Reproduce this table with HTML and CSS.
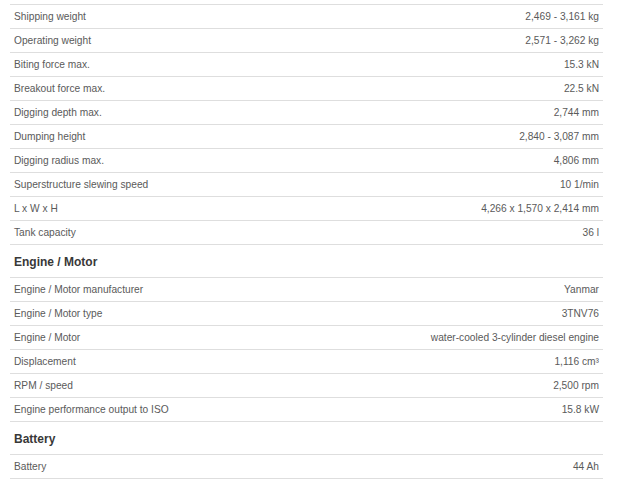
FILE: index.html
```html
<!DOCTYPE html>
<html>
<head>
<meta charset="utf-8">
<link rel="stylesheet" href="styles.css">
</head>
<body>
<div class="specs">
  <table class="spec-table">
    <tr class="row"><td class="label">Shipping weight</td><td class="value">2,469 - 3,161 kg</td></tr>
    <tr class="row"><td class="label">Operating weight</td><td class="value">2,571 - 3,262 kg</td></tr>
    <tr class="row"><td class="label">Biting force max.</td><td class="value">15.3 kN</td></tr>
    <tr class="row"><td class="label">Breakout force max.</td><td class="value">22.5 kN</td></tr>
    <tr class="row"><td class="label">Digging depth max.</td><td class="value">2,744 mm</td></tr>
    <tr class="row"><td class="label">Dumping height</td><td class="value">2,840 - 3,087 mm</td></tr>
    <tr class="row"><td class="label">Digging radius max.</td><td class="value">4,806 mm</td></tr>
    <tr class="row"><td class="label">Superstructure slewing speed</td><td class="value">10 1/min</td></tr>
    <tr class="row"><td class="label">L x W x H</td><td class="value">4,266 x 1,570 x 2,414 mm</td></tr>
    <tr class="row"><td class="label">Tank capacity</td><td class="value">36 l</td></tr>
    <tr class="heading"><td colspan="2">Engine / Motor</td></tr>
    <tr class="row"><td class="label">Engine / Motor manufacturer</td><td class="value">Yanmar</td></tr>
    <tr class="row"><td class="label">Engine / Motor type</td><td class="value">3TNV76</td></tr>
    <tr class="row"><td class="label">Engine / Motor</td><td class="value">water-cooled 3-cylinder diesel engine</td></tr>
    <tr class="row"><td class="label">Displacement</td><td class="value">1,116 cm³</td></tr>
    <tr class="row"><td class="label">RPM / speed</td><td class="value">2,500 rpm</td></tr>
    <tr class="row"><td class="label">Engine performance output to ISO</td><td class="value">15.8 kW</td></tr>
    <tr class="heading"><td colspan="2">Battery</td></tr>
    <tr class="row last"><td class="label">Battery</td><td class="value">44 Ah</td></tr>
  </table>
</div>
</body>
</html>
```
FILE: styles.css
```css
html, body {
  margin: 0;
  padding: 0;
  background: #ffffff;
}
body {
  font-family: "Liberation Sans", Arial, sans-serif;
}
.specs {
  padding: 4px 0 0 10px;
}
.spec-table {
  width: 593px;
  border-collapse: collapse;
  border-spacing: 0;
}
.spec-table td {
  padding: 0 4px;
  border-top: 1px solid #dedede;
}
.row td {
  height: 23px;
  font-size: 10.2px;
  color: #5a5a5a;
  line-height: 23px;
}
.row.last td {
  border-bottom: 1px solid #dedede;
}
.value {
  text-align: right;
}
.heading td {
  height: 29px;
  font-size: 12px;
  font-weight: bold;
  color: #383838;
  line-height: 27px;
  padding-top: 3px;
}
```
